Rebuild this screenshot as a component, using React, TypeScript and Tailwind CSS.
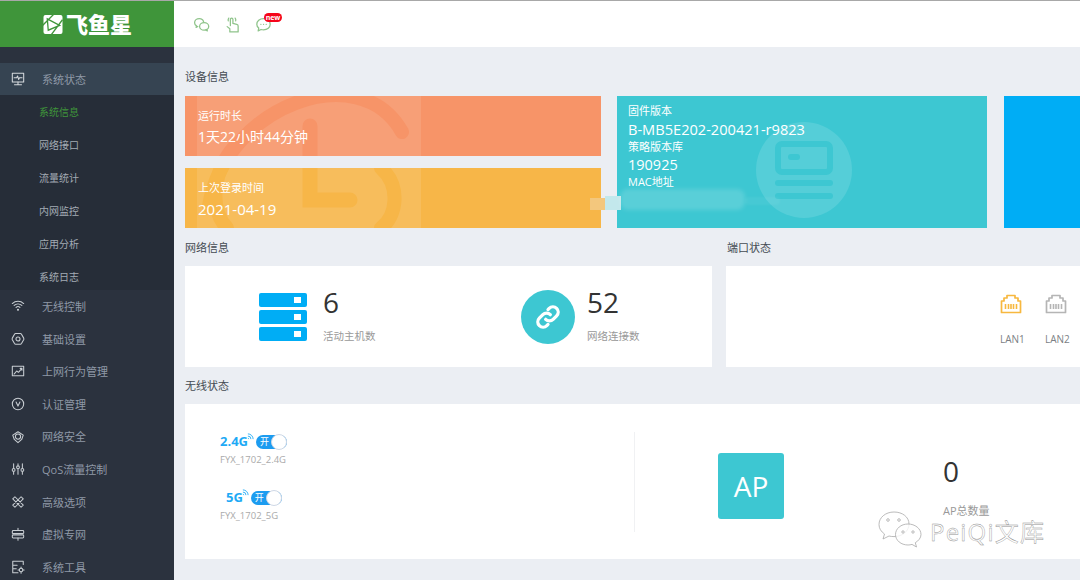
import type { ReactNode } from 'react';

const font = '[font-family:"Open_Sans","Noto_Sans_CJK_SC",sans-serif]';

function Ic({ children, className = 'w-[14px] h-[14px]' }: { children: ReactNode; className?: string }) {
  return (
    <svg viewBox="0 0 16 16" fill="none" stroke="currentColor" strokeWidth="1.2" strokeLinecap="round" strokeLinejoin="round" className={className}>
      {children}
    </svg>
  );
}

const navIcons: Record<string, ReactNode> = {
  monitor: (
    <>
      <rect x="1.5" y="1.5" width="13" height="10" />
      <path d="M3.5 6.5h3l1-2 1.2 4 1-2h3M8 11.5v2.5M4 14.5h8" />
    </>
  ),
  wifi: (
    <>
      <path d="M1.500 5.200a9.500 9.500 0 0 1 13 0M3.600 7.400a6.500 6.500 0 0 1 8.800 0M5.800 9.600a3.200 3.200 0 0 1 4.400 0" />
      <circle cx="8" cy="12.200" r=".6" fill="currentColor" />
    </>
  ),
  gear: (
    <>
      <path d="M5.300 1.800h5.400c.6 0 1 .3 1.300.8l2.500 4.400c.3.600.3 1.200 0 1.800L12 13.200c-.3.500-.7.800-1.300.8H5.300c-.6 0-1-.3-1.300-.8L1.500 8.800c-.3-.6-.3-1.200 0-1.800L4 2.600c.3-.5.700-.8 1.300-.8z" />
      <circle cx="8" cy="7.900" r="2.300" />
    </>
  ),
  chart: (
    <>
      <path d="M1.500 2.500h13v11h-13z" />
      <path d="M3.500 11.500l3-3.500 2 1.500 4-4.500M10.500 5h2v2" />
    </>
  ),
  verify: (
    <>
      <circle cx="8" cy="8" r="6.500" />
      <path d="M5.800 5.800L8 10.400l2.200-4.600" />
    </>
  ),
  shield: (
    <>
      <path d="M8 2l6 3.800-1.800 5L8 14.500l-4.200-3.700L2 5.800z" />
      <circle cx="8" cy="7.500" r="3" />
    </>
  ),
  sliders: (
    <>
      <path d="M3 2v12M8 2v12M13 2v12" />
      <circle cx="3" cy="9" r="1.600" fill="#2b323e" />
      <circle cx="8" cy="6" r="1.600" fill="#2b323e" />
      <circle cx="13" cy="9" r="1.600" fill="#2b323e" />
    </>
  ),
  tools: (
    <>
      <path d="M2 4.500L4.500 2l9.500 9.500-2.500 2.500zM14 4.500L11.500 2 2 11.500 4.500 14z" />
    </>
  ),
  vpn: (
    <>
      <rect x="1.500" y="4" width="13" height="3.500" rx="1" />
      <rect x="1.500" y="9" width="13" height="3.500" rx="1" />
      <path d="M8 1.500V4M8 12.500V15" />
    </>
  ),
  box: (
    <>
      <path d="M14 5V1.500H2v13h6M2 6h5M2 10h4" />
      <circle cx="11.500" cy="11.500" r="2" />
      <path d="M11.500 8v1.400M11.500 13.600V15M8 11.500h1.400M13.600 11.500H15" />
    </>
  ),
};

const subItems = ['系统信息', '网络接口', '流量统计', '内网监控', '应用分析', '系统日志'];

const navItems: [string, string][] = [
  ['wifi', '无线控制'],
  ['gear', '基础设置'],
  ['chart', '上网行为管理'],
  ['verify', '认证管理'],
  ['shield', '网络安全'],
  ['sliders', 'QoS流量控制'],
  ['tools', '高级选项'],
  ['vpn', '虚拟专网'],
  ['box', '系统工具'],
];

function NavRow({ icon, label }: { icon: string; label: string }) {
  return (
    <div className="h-[32.6px] shrink-0 flex items-center pl-[11px] text-[#8f99a7]">
      <span className="w-[31px] text-[#c9ced3]">
        <Ic>{navIcons[icon]}</Ic>
      </span>
      <span className="text-[11px] pt-[2px]">{label}</span>
    </div>
  );
}

function Sidebar() {
  return (
    <aside className="w-[174px] shrink-0 bg-[#2b323e] flex flex-col overflow-hidden">
      <div className="h-[46px] shrink-0 bg-[#3f953a] flex items-center pl-[43px] gap-[3px] text-white">
        <svg viewBox="0 0 20 20" className="w-[20px] h-[19px]">
          <rect x="0" y="0" width="20" height="20" rx="2" fill="currentColor" />
          <path d="M11 -1L-1 11M20 5L8 21M4 4l13 7-12 5z" fill="none" stroke="#3f953a" strokeWidth="1.400" />
        </svg>
        <span className="text-[22px] leading-none font-black">飞鱼星</span>
      </div>
      <div className="h-[16px] shrink-0" />
      <div className="h-[32px] shrink-0 bg-[#364452] flex items-center pl-[11px] text-[#8f99a7]">
        <span className="w-[31px] text-[#d5d9dd]">
          <Ic>{navIcons.monitor}</Ic>
        </span>
        <span className="text-[11px] pt-[2px]">系统状态</span>
      </div>
      <div className="h-[195px] shrink-0 overflow-hidden bg-[#262d38]">
        {subItems.map((item, i) => (
          <div key={item} className={`h-[33px] flex items-center pl-[39px] pt-[2px] text-[10px] ${i === 0 ? 'text-[#3f953a]' : 'text-[#a3abb4]'}`}>
            {item}
          </div>
        ))}
      </div>
      {navItems.map(([icon, label]) => (
        <NavRow key={label} icon={icon} label={label} />
      ))}
    </aside>
  );
}

function TopBar() {
  return (
    <header className="h-[46px] shrink-0 bg-white flex items-center pl-[19px] gap-[14px] text-[#8fc48b]">
      <Ic className="w-[17px] h-[17px]">
        <path d="M10 5.500C9.500 3.500 8 2.500 6 2.500 3.500 2.500 1.500 4.200 1.500 6.300c0 1.300.7 2.300 1.800 3l-.4 1.400 1.600-.8" />
        <ellipse cx="10.500" cy="9.800" rx="4.300" ry="3.500" />
        <path d="M13 12.500l.5 1.500-1.800-1" />
      </Ic>
      <Ic className="w-[17px] h-[17px]">
        <path d="M6 9V3.200a1.200 1.200 0 0 1 2.400 0V7l3.600.8c.8.2 1.300.8 1.300 1.500V15H5.500V12L3 10" />
        <path d="M4 4.500a3 3 0 0 1 .5-2.500M10.500 2a3 3 0 0 1 .5 2.500" />
      </Ic>
      <div className="relative">
        <Ic className="w-[17px] h-[17px]">
          <path d="M8 2.500c3.600 0 6.300 2.300 6.300 5.300S11.600 13 8 13c-.8 0-1.600-.1-2.300-.3L3 14l.5-2.600C2.300 10.500 1.700 9.200 1.700 7.800 1.700 4.800 4.400 2.500 8 2.500z" />
          <path d="M5.500 7.800h.1M8 7.800h.1M10.500 7.800h.1" />
        </Ic>
        <span className="absolute left-[9px] top-[-3px] w-[18px] h-[9px] rounded-full bg-[#f5051a] text-white text-[7px] leading-[9px] text-center font-bold">new</span>
      </div>
    </header>
  );
}

function SectionTitle({ children, className = '' }: { children: ReactNode; className?: string }) {
  return <div className={`h-[20px] leading-[20px] text-[11px] text-[#444b52] ${className}`}>{children}</div>;
}

// the big clock behind the two left cards, clipped by each card
function ClockMark({ top, light, dark }: { top: string; light: string; dark: string }) {
  return (
    <svg viewBox="0 0 236 132" className={`absolute left-0 ${top} w-[236px] h-[132px]`} fill="none">
      <path d="M12 0H236V132H12z" fill={light} />
      <g stroke={dark} strokeWidth="14" strokeLinecap="round">
        <path d="M24 110C40 10 175 -40 217 36" />
        <path d="M42 132C22 110 30 72 50 50M196 72C216 90 212 120 196 132" />
        <path d="M125 30V104H165" strokeWidth="15" />
      </g>
    </svg>
  );
}

function DeviceCards() {
  return (
    <div className="flex">
      <div className="w-[416px] shrink-0 flex flex-col gap-3">
        <div className="relative h-[60px] overflow-hidden bg-[#f79468] text-white pl-[13px]">
          <ClockMark top="top-0" light="#f79f77" dark="#f79468" />
          <div className="relative text-[11px] leading-[14px] pt-[13px]">运行时长</div>
          <div className="relative text-[14px] leading-[20px] mt-[4px]">1天22小时44分钟</div>
        </div>
        <div className="relative h-[60px] overflow-hidden bg-[#f7b648] text-white pl-[13px]">
          <ClockMark top="top-[-72px]" light="#f7bd5c" dark="#f7b648" />
          <div className="relative text-[11px] leading-[14px] pt-[13px]">上次登录时间</div>
          <div className="relative text-[15px] leading-[20px] mt-[4px]">2021-04-19</div>
        </div>
      </div>
      <div className="relative w-[370px] h-[132px] shrink-0 ml-4 overflow-hidden bg-[#3dc7d2] text-white pl-[11px] pt-[7px]">
        <svg viewBox="0 0 96 96" className="absolute left-[139px] top-[26px] w-[96px] h-[96px]">
          <circle cx="48" cy="48" r="48" fill="#55ced8" />
          <rect x="22" y="22" width="52" height="28" rx="4" fill="none" stroke="#3dc7d2" strokeWidth="6" />
          <rect x="32" y="32" width="12" height="6" rx="3" fill="#3dc7d2" />
          <rect x="19" y="58" width="58" height="6" rx="3" fill="#3dc7d2" />
          <rect x="19" y="71" width="58" height="6" rx="3" fill="#3dc7d2" />
        </svg>
        <div className="relative text-[11px] leading-[16px]">固件版本</div>
        <div className="relative text-[14.6px] leading-[20px]">B-MB5E202-200421-r9823</div>
        <div className="relative text-[11px] leading-[16px]">策略版本库</div>
        <div className="relative text-[14.5px] leading-[19px]">190925</div>
        <div className="relative text-[11px] leading-[16px]">MAC地址</div>
      </div>
      <div className="w-[100px] h-[132px] ml-[17px] shrink-0 bg-[#00adf5]" />
    </div>
  );
}

function Stat({ value, label }: { value: string; label: string }) {
  return (
    <div className="pb-[6px]">
      <div className="text-[28px] leading-[36px] text-[#333]">{value}</div>
      <div className="text-[10.5px] leading-[16px] mt-[8px] text-[#999]">{label}</div>
    </div>
  );
}

function NetworkPanel() {
  return (
    <div className="w-[527px] h-[101px] shrink-0 bg-white flex items-center pl-[74px]">
      <div className="w-[262px] flex items-center gap-4">
        <div className="w-[48px] flex flex-col gap-[3px]">
          {[0, 1, 2].map((n) => (
            <div key={n} className="h-[14px] rounded-[2px] bg-[#00adf5] flex items-center justify-end pr-[6px]">
              <span className="w-[7px] h-[6px] bg-white" />
            </div>
          ))}
        </div>
        <Stat value="6" label="活动主机数" />
      </div>
      <div className="flex items-center gap-[12px]">
        <div className="w-[54px] h-[54px] rounded-full bg-[#3dc7d2] flex items-center justify-center">
          <svg viewBox="0 0 24 24" className="w-[28px] h-[28px]" fill="none" stroke="white" strokeWidth="2.800" strokeLinecap="round">
            <path d="M10 14a4.500 4.500 0 0 0 6.400 0l3-3a4.500 4.500 0 0 0-6.400-6.400l-1 1" />
            <path d="M14 10a4.500 4.500 0 0 0-6.400 0l-3 3a4.500 4.500 0 0 0 6.400 6.400l1-1" />
          </svg>
        </div>
        <Stat value="52" label="网络连接数" />
      </div>
    </div>
  );
}

function LanPort({ name, color }: { name: string; color: string }) {
  return (
    <div className="w-[45px] flex flex-col items-start">
      <svg viewBox="0 0 22 20" className="w-[22px] h-[20px]" fill="none" stroke={color} strokeWidth="1.700" strokeLinejoin="round">
        <path d="M7 1.500h8V4h3v3h2.500v11.500h-19V7H4V4h3z" />
        <path d="M5.500 10v5M8.500 10v5M11 10v5M13.500 10v5M16.500 10v5" strokeWidth="1.600" />
      </svg>
      <div className="mt-[18px] text-[10px] leading-[14px] text-[#7b7f85]">{name}</div>
    </div>
  );
}

function Toggle() {
  return (
    <div className="relative w-[31px] h-[14px] rounded-full bg-[#1c9cf0] text-white text-[9px] leading-[14px] pl-[4px]">
      开
      <span className="absolute right-0 top-[-1px] w-[16px] h-[16px] rounded-full bg-white border border-[#cfd8e6]" />
    </div>
  );
}

function Band({ label, ssid, pad }: { label: string; ssid: string; pad: string }) {
  return (
    <div>
      <div className={`h-[20px] flex items-center ${pad}`}>
        <span className="relative text-[13px] font-bold text-[#1eaaf5]">
          {label}
          <svg viewBox="0 0 8 8" className="absolute right-[-6px] top-[1px] w-[7px] h-[7px]" fill="none" stroke="#1eaaf5" strokeWidth="1">
            <path d="M1 1a6 6 0 0 1 6 6M1 3.500A3.500 3.500 0 0 1 4.500 7M1 6a1 1 0 0 1 1 1" />
          </svg>
        </span>
        <span className="ml-[8px]">
          <Toggle />
        </span>
      </div>
      <div className="text-[9.5px] leading-[14px] mt-[1px] text-[#aaa]">{ssid}</div>
    </div>
  );
}

function WirelessPanel() {
  return (
    <div className="h-[155px] bg-white flex items-start pl-[35px] pt-[28px]">
      <div className="w-[414px] shrink-0 flex flex-col gap-[21px]">
        <Band label="2.4G" ssid="FYX_1702_2.4G" pad="" />
        <Band label="5G" ssid="FYX_1702_5G" pad="pl-[6px]" />
      </div>
      <div className="w-px h-[100px] bg-[#f0f1f3]" />
      <div className="ml-[83px] mt-[21px] w-[66px] h-[66px] rounded-[3px] bg-[#3dc7d2] text-white text-[28px] flex items-center justify-center">AP</div>
      <div className="ml-[159px] mt-[21px]">
        <div className="text-[28px] leading-[36px] text-[#333]">0</div>
        <div className="text-[11px] leading-[16px] mt-[14px] text-[#999]">AP总数量</div>
      </div>
    </div>
  );
}

export default function App() {
  return (
    <div className={`relative w-[1080px] h-[580px] overflow-hidden flex border-t border-[#a8a8a8] bg-[#ebeef3] ${font}`}>
      <Sidebar />
      <div className="flex-1 min-w-0 flex flex-col">
        <TopBar />
        <main className="pl-[11px] pt-[20px] overflow-hidden">
          <SectionTitle className="mb-[9px]">设备信息</SectionTitle>
          <DeviceCards />
          <div className="flex mt-[10px] mb-[8px]">
            <SectionTitle className="w-[542px]">网络信息</SectionTitle>
            <SectionTitle>端口状态</SectionTitle>
          </div>
          <div className="flex gap-[14px]">
            <NetworkPanel />
            <div className="flex-1 h-[101px] bg-white flex pl-[274px] pt-[28px]">
              <LanPort name="LAN1" color="#f7b83f" />
              <LanPort name="LAN2" color="#b5b5b5" />
            </div>
          </div>
          <SectionTitle className="mt-[9px] mb-[8px]">无线状态</SectionTitle>
          <WirelessPanel />
        </main>
      </div>
      {/* mosaic smear over the MAC address */}
      <div className="absolute left-[590px] top-[197px] w-[15px] h-[12px] bg-[#f3c77d]" />
      <div className="absolute left-[605px] top-[195px] w-[16px] h-[14px] bg-[#c3e8ec]" />
      <div className="absolute left-[620px] top-[188px] w-[125px] h-[21px] bg-white/15 blur-[2px] rounded-[8px]" />
      <div className="absolute left-[745px] top-[196px] w-[35px] h-[8px] bg-white/5 blur-[1px] rounded-full" />
      {/* wechat watermark stamped on top of the shot */}
      <div className="absolute left-[878px] top-[510px] flex items-end gap-[8px] pointer-events-none">
        <svg viewBox="0 0 44 38" className="w-[44px] h-[38px]" fill="#ffffffcc" stroke="#a9a9a9" strokeWidth=".8">
          <path d="M16 1C7.500 1 1 6.500 1 13.500c0 4 2 7 5.500 9.500L5 28l6-3c1.500.4 3 .6 5 .6 8.500 0 15-5.600 15-12.600S24.500 1 16 1z" />
          <circle cx="10" cy="9" r="1.300" />
          <circle cx="21" cy="9" r="1.300" />
          <path d="M30 13c-7 0-12.500 4.600-12.500 10.500S23 34 30 34c1.400 0 2.700-.2 4-.6l4.500 2.600-1.200-4.300C40.600 29.800 43 26.800 43 23.500 43 17.600 37 13 30 13z" />
          <circle cx="25" cy="21" r="1.200" />
          <circle cx="35" cy="21" r="1.200" />
        </svg>
        <span className="text-[24px] leading-[30px] tracking-[1.2px] mb-[2px] text-white/90 [-webkit-text-stroke:0.4px_#8f8f8f]">PeiQi文库</span>
      </div>
    </div>
  );
}
